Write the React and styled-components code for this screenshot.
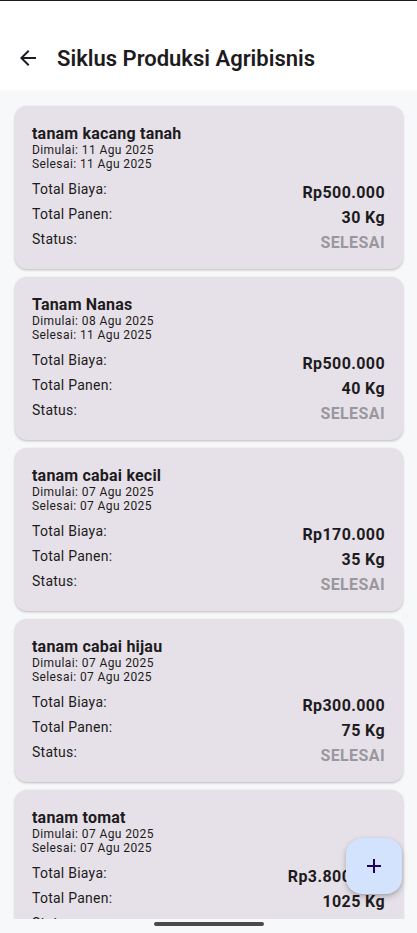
import styled, { createGlobalStyle } from "styled-components";

const GlobalStyle = createGlobalStyle`
  html, body {
    margin: 0;
    padding: 0;
    background: #ffffff;
  }
  * {
    box-sizing: border-box;
  }
`;

const Screen = styled.div`
  position: relative;
  width: 417px;
  height: 933px;
  display: flex;
  flex-direction: column;
  overflow: hidden;
  font-family: Roboto, "Noto Sans", sans-serif;
  color: #1d1b20;
  background: #f7f8fa;
`;

const StatusLine = styled.div`
  height: 1px;
  background: #1c1c1c;
`;

const AppBar = styled.div`
  height: 89px;
  background: #ffffff;
  display: flex;
  align-items: center;
  padding: 25px 16px 0 16px;
  gap: 17px;
`;

const BackButton = styled.div`
  width: 24px;
  height: 24px;
  display: flex;
  color: #1d1b20;
`;

const Title = styled.h1`
  margin: 0;
  font-size: 22px;
  font-weight: 600;
  letter-spacing: 0;
  color: #1d1b20;
`;

const List = styled.div`
  flex: 1;
  overflow: hidden;
  display: flex;
  flex-direction: column;
  gap: 8px;
  padding: 16px 14px 0 15px;
`;

const Card = styled.div`
  flex-shrink: 0;
  background: #e6e1e8;
  border-radius: 12px;
  padding: 19px 18px 14px 17px;
  box-shadow: 0 1px 3px rgba(0, 0, 0, 0.18), 0 1px 2px rgba(0, 0, 0, 0.08);
`;

const CardTitle = styled.div`
  font-size: 16px;
  line-height: 18px;
  font-weight: 700;
  letter-spacing: 0.2px;
`;

const DateText = styled.div`
  font-size: 12px;
  line-height: 14px;
  letter-spacing: 0.4px;
  color: #1d1b20;
`;

const Rows = styled.div`
  margin-top: 8px;
  display: flex;
  flex-direction: column;
`;

const Row = styled.div`
  display: flex;
  justify-content: space-between;
  align-items: flex-start;
  height: ${(p) => (p.$last ? "26px" : "25px")};
`;

const Label = styled.span`
  font-size: 14px;
  line-height: 20px;
  letter-spacing: 0.25px;
  color: #1d1b20;
`;

const Value = styled.span`
  margin-top: 2px;
  font-size: 16px;
  line-height: 24px;
  font-weight: 700;
  color: ${(p) => (p.$muted ? "#9a979c" : "#1d1b20")};
  letter-spacing: 0.4px;
`;

const NavBar = styled.div`
  height: 14px;
  flex-shrink: 0;
  background: #f7f8fa;
  display: flex;
  justify-content: center;
  padding-top: 3px;
`;

const Handle = styled.div`
  width: 110px;
  height: 4px;
  border-radius: 2px;
  background: #4a4a4a;
`;

const Fab = styled.button`
  position: absolute;
  left: 346px;
  top: 838px;
  width: 56px;
  height: 56px;
  border: none;
  border-radius: 16px;
  background: #d4e3fd;
  display: flex;
  align-items: center;
  justify-content: center;
  box-shadow: 0 3px 6px rgba(0, 0, 0, 0.2), 0 1px 3px rgba(0, 0, 0, 0.12);
  padding: 0;
`;

const cycles = [
  { name: "tanam kacang tanah", start: "11 Agu 2025", end: "11 Agu 2025", cost: "Rp500.000", harvest: "30 Kg" },
  { name: "Tanam Nanas", start: "08 Agu 2025", end: "11 Agu 2025", cost: "Rp500.000", harvest: "40 Kg" },
  { name: "tanam cabai kecil", start: "07 Agu 2025", end: "07 Agu 2025", cost: "Rp170.000", harvest: "35 Kg" },
  { name: "tanam cabai hijau", start: "07 Agu 2025", end: "07 Agu 2025", cost: "Rp300.000", harvest: "75 Kg" },
  { name: "tanam tomat", start: "07 Agu 2025", end: "07 Agu 2025", cost: "Rp3.800.000", harvest: "1025 Kg" },
];

function App() {
  return (
    <Screen>
      <GlobalStyle />
      <StatusLine />
      <AppBar>
        <BackButton>
          <svg width="24" height="24" viewBox="0 0 24 24" fill="currentColor">
            <path d="M20 11H7.83l5.59-5.59L12 4l-8 8 8 8 1.41-1.41L7.83 13H20v-2z" />
          </svg>
        </BackButton>
        <Title>Siklus Produksi Agribisnis</Title>
      </AppBar>
      <List>
        {cycles.map((c) => (
          <Card key={c.name}>
            <CardTitle>{c.name}</CardTitle>
            <DateText>Dimulai: {c.start}</DateText>
            <DateText>Selesai: {c.end}</DateText>
            <Rows>
              <Row>
                <Label>Total Biaya:</Label>
                <Value>{c.cost}</Value>
              </Row>
              <Row>
                <Label>Total Panen:</Label>
                <Value>{c.harvest}</Value>
              </Row>
              <Row $last>
                <Label>Status:</Label>
                <Value $muted>SELESAI</Value>
              </Row>
            </Rows>
          </Card>
        ))}
      </List>
      <NavBar>
        <Handle />
      </NavBar>
      <Fab>
        <svg width="24" height="24" viewBox="0 0 24 24" fill="#21005d">
          <path d="M19 13h-6v6h-2v-6H5v-2h6V5h2v6h6v2z" />
        </svg>
      </Fab>
    </Screen>
  );
}

export default App;
